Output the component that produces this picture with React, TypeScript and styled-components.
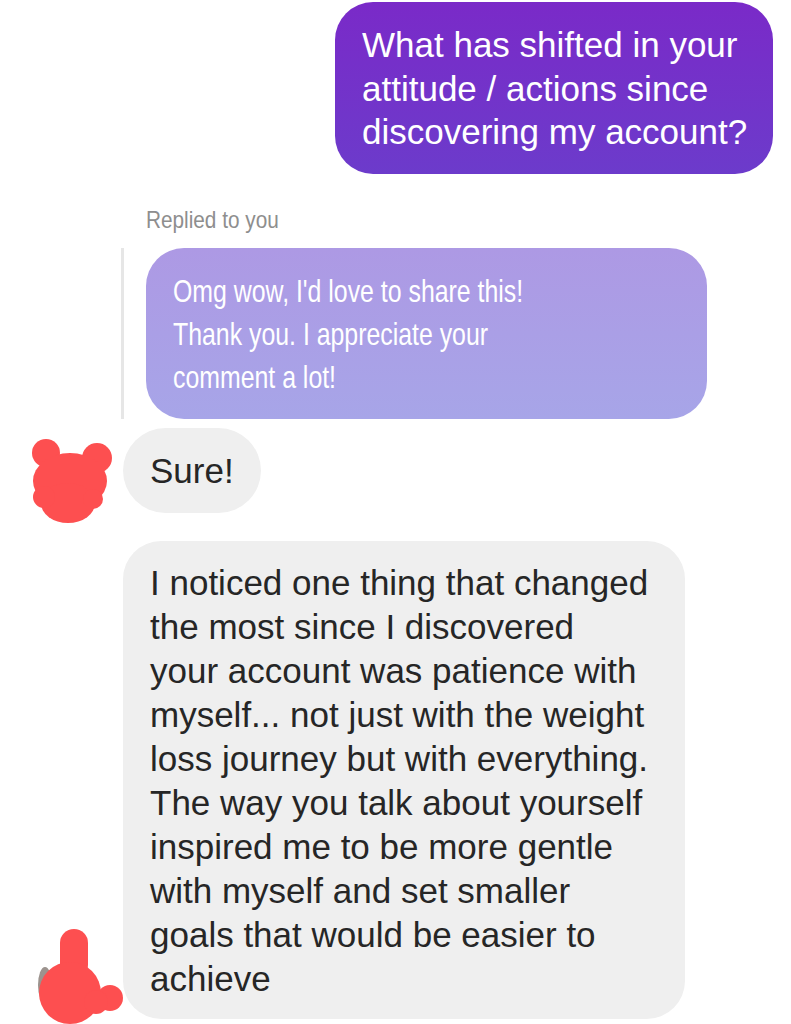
import React from "react";
import styled, { createGlobalStyle } from "styled-components";

const Global = createGlobalStyle`
  html, body { margin: 0; padding: 0; background: #ffffff; }
  body { font-family: "Liberation Sans", Arial, Helvetica, sans-serif; }
`;

const Page = styled.div`
  width: 791px;
  height: 1024px;
  overflow: hidden;
  display: flex;
  flex-direction: column;
  background: #fff;
  font-family: "Liberation Sans", Arial, Helvetica, sans-serif;
`;

const OutRow = styled.div`
  display: flex;
  justify-content: flex-end;
  padding: 2px 18px 0 0;
`;

const OutBubble = styled.div`
  width: 438px;
  box-sizing: border-box;
  padding: 21px 20px 20px 27px;
  border-radius: 38px;
  background: linear-gradient(180deg, #7a2ac8 0%, #6c3bcb 100%);
  color: #ffffff;
  font-size: 35px;
  line-height: 43.5px;
  white-space: nowrap;
`;

/* The reply part of the screenshot uses a narrower face */
const Narrow = styled.span<{ $scale: number }>`
  display: inline-block;
  transform: scaleX(${(p) => p.$scale});
  transform-origin: left top;
`;

const RepliedLabel = styled.div`
  margin: 30px 0 0 146px;
  font-size: 24px;
  line-height: 32px;
  color: #8e8e8e;
  white-space: nowrap;
`;

const QuoteBlock = styled.div`
  margin: 12px 0 0 121px;
  border-left: 3px solid #e6e6e6;
  padding-left: 22px;
  display: flex;
`;

const QuoteBubble = styled.div`
  width: 561px;
  box-sizing: border-box;
  padding: 22px 20px 20px 27px;
  border-radius: 38px;
  background: linear-gradient(180deg, #ad99e4 0%, #a7a5e8 100%);
  color: #ffffff;
  font-size: 30.5px;
  line-height: 43px;
  white-space: nowrap;
`;

const InRow = styled.div<{ $top: number }>`
  display: flex;
  align-items: flex-start;
  margin-top: ${(p) => p.$top}px;
`;

const AvatarSlot = styled.div`
  width: 123px;
  flex: none;
  align-self: stretch;
  display: flex;
  flex-direction: column;
  justify-content: flex-end;
`;

const InBubble = styled.div<{ $pill?: boolean }>`
  box-sizing: border-box;
  background: #efefef;
  color: #262626;
  font-size: 35px;
  white-space: nowrap;
  border-radius: ${(p) => (p.$pill ? "43px" : "38px")};
  padding: ${(p) => (p.$pill ? "0 27px" : "20px 27px 18px 27px")};
  height: ${(p) => (p.$pill ? "85px" : "auto")};
  width: ${(p) => (p.$pill ? "auto" : "562px")};
  line-height: ${(p) => (p.$pill ? "85px" : "44.1px")};
`;

const Lines: React.FC<{ lines: string[] }> = ({ lines }) => (
  <>
    {lines.map((l, i) => (
      <React.Fragment key={i}>
        {l}
        {i < lines.length - 1 && <br />}
      </React.Fragment>
    ))}
  </>
);

const Blob1 = () => (
  <svg
    width="123"
    height="95"
    viewBox="0 0 123 95"
    style={{ marginTop: 9, marginBottom: -19, display: "block", alignSelf: "flex-start" }}
  >
    <g fill="#fd4f50">
      <circle cx="46" cy="16" r="14" />
      <circle cx="97" cy="21" r="15" />
      <ellipse cx="70" cy="44" rx="37" ry="28" />
      <ellipse cx="68" cy="66" rx="27" ry="20" />
      <circle cx="44" cy="60" r="11" />
      <circle cx="93" cy="62" r="10" />
    </g>
  </svg>
);

const Blob2 = () => (
  <svg width="123" height="96" viewBox="0 0 123 96" style={{ display: "block", marginBottom: -6 }}>
    <ellipse cx="45" cy="56" rx="7" ry="18" fill="#9c938e" />
    <g fill="#fd4f50">
      <rect x="60" y="0" width="28" height="50" rx="14" />
      <ellipse cx="70" cy="64" rx="31" ry="31" />
      <circle cx="110" cy="69" r="13" />
      <circle cx="96" cy="73" r="12" />
    </g>
  </svg>
);

export default function App() {
  return (
    <Page>
      <Global />
      <OutRow>
        <OutBubble>
          <Lines
            lines={[
              "What has shifted in your",
              "attitude / actions since",
              "discovering my account?",
            ]}
          />
        </OutBubble>
      </OutRow>
      <RepliedLabel>
        <Narrow $scale={0.865}>Replied to you</Narrow>
      </RepliedLabel>
      <QuoteBlock>
        <QuoteBubble>
          <Narrow $scale={0.815}>
            <Lines
              lines={[
                "Omg wow, I'd love to share this!",
                "Thank you. I appreciate your",
                "comment a lot!",
              ]}
            />
          </Narrow>
        </QuoteBubble>
      </QuoteBlock>
      <InRow $top={9}>
        <AvatarSlot>
          <Blob1 />
        </AvatarSlot>
        <InBubble $pill>Sure!</InBubble>
      </InRow>
      <InRow $top={28}>
        <AvatarSlot>
          <Blob2 />
        </AvatarSlot>
        <InBubble>
          <Lines
            lines={[
              "I noticed one thing that changed",
              "the most since I discovered",
              "your account was patience with",
              "myself... not just with the weight",
              "loss journey but with everything.",
              "The way you talk about yourself",
              "inspired me to be more gentle",
              "with myself and set smaller",
              "goals that would be easier to",
              "achieve",
            ]}
          />
        </InBubble>
      </InRow>
    </Page>
  );
}
